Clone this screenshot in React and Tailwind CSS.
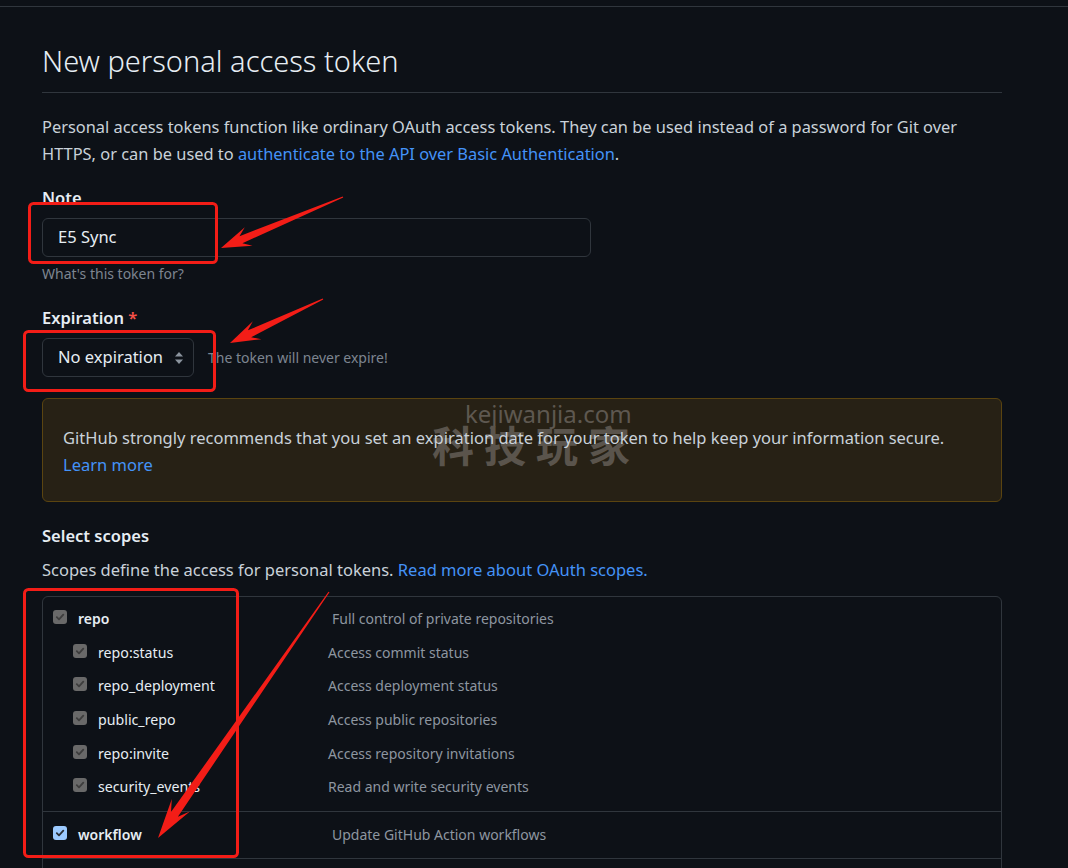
import React from "react";

// scope rows shown in the table
const subScopes = [
  ["repo:status", "Access commit status"],
  ["repo_deployment", "Access deployment status"],
  ["public_repo", "Access public repositories"],
  ["repo:invite", "Access repository invitations"],
  ["security_events", "Read and write security events"],
];

function Check({ blue }) {
  return (
    <span
      className={
        "-mt-[3px] flex h-[14px] w-[14px] shrink-0 items-center justify-center rounded-[3px] " +
        (blue ? "bg-[#9ccaff]" : "bg-[#696969]")
      }
    >
      <svg width="10" height="10" viewBox="0 0 10 10">
        <path
          d="M1.8 5.2 L4 7.3 L8.3 2.6"
          fill="none"
          stroke={blue ? "#2a2f36" : "#3d3d3d"}
          strokeWidth="1.8"
          strokeLinecap="round"
          strokeLinejoin="round"
        />
      </svg>
    </span>
  );
}

// red annotation arrow: thin tail, wide head
function arrowPoints(tx, ty, px, py, head, half) {
  const len = Math.hypot(px - tx, py - ty);
  const dx = (px - tx) / len;
  const dy = (py - ty) / len;
  const nx = -dy;
  const ny = dx;
  const neck = [px - dx * head * 0.72, py - dy * head * 0.72];
  const barb = [px - dx * head, py - dy * head];
  const pts = [
    [tx + nx * 0.6, ty + ny * 0.6],
    [neck[0] + nx * half * 0.38, neck[1] + ny * half * 0.38],
    [barb[0] + nx * half, barb[1] + ny * half],
    [px, py],
    [barb[0] - nx * half, barb[1] - ny * half],
    [neck[0] - nx * half * 0.38, neck[1] - ny * half * 0.38],
    [tx - nx * 0.6, ty - ny * 0.6],
  ];
  return pts.map((p) => p.join(",")).join(" ");
}

function Annotations() {
  return (
    <svg className="pointer-events-none absolute left-0 top-0" width="1068" height="868">
      <rect x="29.5" y="203.5" width="187" height="59" rx="4" fill="none" stroke="#f31d17" strokeWidth="3" />
      <rect x="24.5" y="331.5" width="190" height="59" rx="4" fill="none" stroke="#f31d17" strokeWidth="3" />
      <rect x="24.5" y="589.5" width="213" height="267" rx="4" fill="none" stroke="#f31d17" strokeWidth="3" />
      <polygon points={arrowPoints(343, 197, 221, 248, 30, 10)} fill="#f31d17" />
      <polygon points={arrowPoints(323, 299, 230, 343, 30, 10)} fill="#f31d17" />
      <polygon points={arrowPoints(329, 592, 158, 838, 40, 11)} fill="#f31d17" />
    </svg>
  );
}

export default function App() {
  return (
    <div className="relative min-h-screen bg-[#0d1117] font-['Noto_Sans','Liberation_Sans',sans-serif] text-[#c9d1d9]">
      {/* header edge */}
      <div className="h-[7px] border-b border-[#30363d]" />

      <div className="ml-[42px] w-[960px]">
        {/* title */}
        <h2 className="mt-[33px] border-b border-[#30363d] pb-[10px] text-[29px] leading-[42px] font-light text-[#e6edf3]">
          New personal access token
        </h2>

        <p className="mt-[20px] text-[16.4px] leading-[27px]">
          Personal access tokens function like ordinary OAuth access tokens. They can be used instead of a password for Git over HTTPS, or can be used to{" "}
          <span className="text-[#4493f8]">authenticate to the API over Basic Authentication</span>.
        </p>

        {/* note */}
        <div className="mt-[19px] text-[16.5px] leading-[24px] font-semibold text-[#e6edf3]">Note</div>
        <div className="mt-[8px] flex h-[39px] w-[549px] items-center rounded-md border border-[#30363d] pl-[15px] text-[16.5px] text-[#e6edf3]">
          E5 Sync
        </div>
        <div className="mt-[7px] text-[14px] leading-[20px] text-[#7d8590]">What's this token for?</div>

        {/* expiration */}
        <div className="mt-[22px] text-[16.5px] leading-[24px] font-semibold text-[#e6edf3]">
          Expiration <span className="text-[#f85149]">*</span>
        </div>
        <div className="mt-[8px] flex items-center">
          <div className="flex h-[39px] w-[152px] items-center justify-between rounded-md border border-[#30363d] pl-[15px] pr-[9px] text-[16.5px] text-[#e6edf3]">
            No expiration
            <svg width="10" height="14" viewBox="0 0 10 14">
              <path d="M5 1 L9 5.5 H1 Z" fill="#8b949e" />
              <path d="M5 13 L9 8.5 H1 Z" fill="#8b949e" />
            </svg>
          </div>
          <span className="ml-[14px] text-[14px] text-[#7d8590]">The token will never expire!</span>
        </div>

        {/* warning */}
        <div className="relative mt-[21px] rounded-md border border-[#5a4410] bg-[#272115] px-[20px] pt-[25px] pb-[23px] text-[16.5px] leading-[27px]">
          <span className="absolute left-[422px] top-0 text-[24px] leading-[30px] text-[#5e5850]">kejiwanjia.com</span>
          <span className="absolute left-[389px] top-[22px] font-['Noto_Sans_CJK_SC',sans-serif] text-[42px] leading-[46px] font-bold tracking-[10px] text-[#5a544c]">
            科技玩家
          </span>
          <div className="relative">
            GitHub strongly recommends that you set an expiration date for your token to help keep your information secure.
          </div>
          <div className="relative text-[#4493f8]">Learn more</div>
        </div>

        {/* scopes */}
        <div className="mt-[22px] text-[16.5px] leading-[24px] font-semibold text-[#e6edf3]">Select scopes</div>
        <p className="mt-[8px] text-[16.5px] leading-[27px]">
          Scopes define the access for personal tokens.{" "}
          <span className="text-[#4493f8]">Read more about OAuth scopes.</span>
        </p>

        <div className="mt-[13px] rounded-md border border-[#30363d]">
          <div className="border-b border-[#30363d] pt-[5px] pb-[7px]">
            <div className="flex h-[33.6px] items-center pl-[10px]">
              <Check />
              <span className="ml-[11px] w-[254px] text-[14px] font-semibold text-[#e6edf3]">repo</span>
              <span className="text-[14px] text-[#8d96a0]">Full control of private repositories</span>
            </div>
            {subScopes.map(([name, desc]) => (
              <div key={name} className="flex h-[33.6px] items-center pl-[30px]">
                <Check />
                <span className="ml-[11px] w-[230px] text-[14.2px] text-[#e6edf3]">{name}</span>
                <span className="text-[14px] text-[#8d96a0]">{desc}</span>
              </div>
            ))}
          </div>
          <div className="flex h-[47px] items-center border-b border-[#30363d] pl-[10px]">
            <Check blue />
            <span className="ml-[11px] w-[254px] text-[14px] font-semibold text-[#e6edf3]">workflow</span>
            <span className="text-[14px] text-[#8d96a0]">Update GitHub Action workflows</span>
          </div>
          {/* next row continues below the fold */}
          <div className="h-[47px]" />
        </div>
      </div>

      <Annotations />
    </div>
  );
}
